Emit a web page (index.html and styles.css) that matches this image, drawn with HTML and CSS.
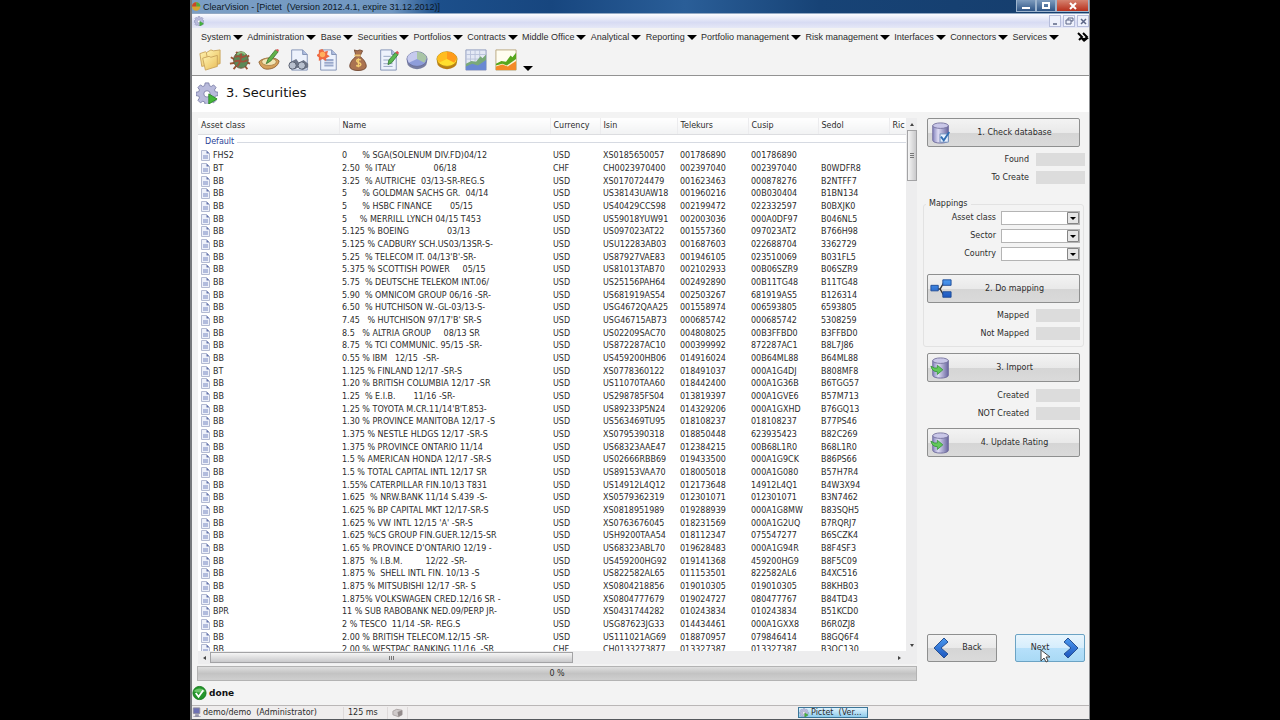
FILE: index.html
```html
<!DOCTYPE html>
<html lang="en">
<head>
<meta charset="utf-8">
<title>ClearVision - [Pictet  (Version 2012.4.1, expire 31.12.2012)]</title>
<link rel="stylesheet" href="styles.css">
</head>
<body>
<svg class="defs" aria-hidden="true">
  <defs>
    <linearGradient id="lilac"><stop offset="0" stop-color="#8584bd"/><stop offset=".35" stop-color="#dedcf4"/><stop offset="1" stop-color="#68669f"/></linearGradient>
    <linearGradient id="gold" x2="1" y2="1"><stop offset="0" stop-color="#fff3b0"/><stop offset="1" stop-color="#e9bd58"/></linearGradient>
    <linearGradient id="blue" x2="0" y2="1"><stop offset="0" stop-color="#4c9af0"/><stop offset="1" stop-color="#1c55bd"/></linearGradient>
    <symbol id="gear" viewBox="0 0 24 24">
      <path d="M10 1h4l.6 3 2 .9 2.600-1.700 2.700 2.800-1.700 2.600.8 2 3 .6v3.600l-3 .6-.8 2 1.700 2.600-2.700 2.700-2.600-1.700-2 .8-.6 3h-4l-.6-3-2-.8-2.600 1.700-2.700-2.700 1.700-2.600-.8-2-3-.6v-3.600l3-.6.8-2L2.100 6l2.700-2.800 2.600 1.700 2-.9z" fill="#b9bbdc" stroke="#7d80a8"/>
      <circle cx="12" cy="13" r="3.500" fill="#fff" stroke="#7d80a8"/>
      <path d="M14 13l9 5.500-9 5.500z" fill="#45b83a" stroke="#2c8a26"/>
    </symbol>
    <symbol id="page" viewBox="0 0 24 24">
      <path d="M4 1h12l5 5v17H4z" fill="#edf2fc" stroke="#7f8fb3"/><path d="M16 1v5h5" fill="#aebde0" stroke="#7f8fb3"/>
    </symbol>
    <symbol id="drum" viewBox="0 0 24 24">
      <path d="M3 4v16c0 4 17 4 17 0V4z" fill="url(#lilac)" stroke="#6d6a9b"/><ellipse cx="11.500" cy="4" rx="8.500" ry="3" fill="#c9c7e8" stroke="#77749f"/>
    </symbol>
  </defs>
</svg>

<div class="window">
  <header class="titlebar">
    <svg class="app-icon" viewBox="0 0 12 12"><circle cx="5" cy="6" r="5" fill="#d6a430"/><path d="M5 6V1a5 5 0 0 1 5 5z" fill="#4faa3d"/><path d="M5 6H0a5 5 0 0 1 5-5z" fill="#c7452b"/></svg>
    <span class="title-text">ClearVision - [Pictet&nbsp; (Version 2012.4.1, expire 31.12.2012)]</span>
    <div class="caption-buttons">
      <button class="cap" aria-label="Minimize"><svg viewBox="0 0 10 8"><path d="M1 5h8v2H1z" fill="#fff"/></svg></button>
      <button class="cap" aria-label="Maximize"><svg viewBox="0 0 10 8"><path d="M2 1h6v5H2z" fill="none" stroke="#fff" stroke-width="2"/></svg></button>
      <button class="cap cap-close" aria-label="Close"><svg viewBox="0 0 10 8"><path d="M2 1l6 6M8 1L2 7" stroke="#fff" stroke-width="2"/></svg></button>
    </div>
  </header>

  <div class="mdibar">
    <svg class="mdi-icon"><use href="#gear"/></svg>
    <div class="mdi-buttons">
      <button class="mdi" aria-label="Minimize document"><svg viewBox="0 0 10 10"><path d="M3 8h4" stroke="#5b6585" stroke-width="1.500"/></svg></button>
      <button class="mdi" aria-label="Restore document"><svg viewBox="0 0 10 10"><path d="M4 4V2h5v3H7M2 4h5v4H2z" fill="none" stroke="#5b6585"/></svg></button>
      <button class="mdi" aria-label="Close document"><svg viewBox="0 0 10 10"><path d="M3 3l5 5M8 3L3 8" stroke="#5b6585" stroke-width="1.500"/></svg></button>
    </div>
  </div>

  <nav class="menubar">
    <div class="menus">
      <button class="menu">System</button>
      <button class="menu">Administration</button>
      <button class="menu">Base</button>
      <button class="menu">Securities</button>
      <button class="menu">Portfolios</button>
      <button class="menu">Contracts</button>
      <button class="menu">Middle Office</button>
      <button class="menu">Analytical</button>
      <button class="menu">Reporting</button>
      <button class="menu">Portfolio management</button>
      <button class="menu">Risk management</button>
      <button class="menu">Interfaces</button>
      <button class="menu">Connectors</button>
      <button class="menu">Services</button>
    </div>
    <button class="menu-more" aria-label="More menus"><svg viewBox="0 0 12 10"><path d="M1 1l4 4-3 3M6 1l4 4-3 3" fill="none" stroke="#000" stroke-width="2"/><path d="M3 6h9l-5 4z"/></svg></button>
  </nav>

  <div class="toolbar">
    <div class="tools">
      <button class="tool" aria-label="Folders"><svg viewBox="0 0 24 24"><g fill="url(#gold)" stroke="#c9a45c"><path d="M1 5l6-2 2 2 7-1v12L3 19z"/><path d="M8 4l5-3 3 1 7-1v15l-12 3z"/><path d="M4 10l7-2 2 1 7-2v12L7 23z"/></g></svg></button>
      <button class="tool" aria-label="Bug"><svg viewBox="0 0 24 24"><path d="M2 9l5 3M1 16l6-1M5 22l4-5M20 22l-3-4M23 16l-5-2M22 7l-4 3M8 3l2 4" stroke="#9c5333" stroke-width="2"/><ellipse cx="13" cy="12" rx="8" ry="9" fill="#5b8857" stroke="#6c5537"/><path d="M7 9c4-4 6 3 12-2M6 14c5-4 8 3 14-2M9 19c4-5 5-9 4-16" fill="none" stroke="#a0513a" stroke-width="2"/><path d="M9 6c3-3 6-3 9 0" fill="none" stroke="#8bbf7d" stroke-width="2"/></svg></button>
      <button class="tool" aria-label="Edit balance"><svg viewBox="0 0 24 24"><path d="M1 14c4-5 18-6 22-1-1 6-7 9-13 9-5 0-8-4-9-8z" fill="#d6a15a" stroke="#916332"/><ellipse cx="12" cy="14" rx="8" ry="4" fill="#f2e5b4" stroke="#af844c"/><path d="M9 16l2-5 8-10 3 2-8 10z" fill="#62b24a" stroke="#467d3a"/><path d="M19 1l3 2 1-2-2-1z" fill="#dc5b5b"/></svg></button>
      <button class="tool" aria-label="Find document"><svg viewBox="0 0 24 24"><use href="#page"/><path d="M3 14l6-3 3 4 5-3 5 4v4l-6 3-4-3-5 2-6-4z" fill="#6d7588"/><circle cx="5" cy="18" r="4" fill="#b8c0ce" stroke="#525a6a"/><circle cx="15" cy="18" r="4" fill="#b8c0ce" stroke="#525a6a"/></svg></button>
      <button class="tool" aria-label="New document"><svg viewBox="0 0 24 24"><use href="#page"/><path d="M8 12h10M8 15h10M8 18h10" stroke="#9aa9cb" stroke-width="2"/><path d="M6 0l2 3 4-1-1 4 3 2-4 2v3l-4-2-4 2v-4L-1 7l3-2V1z" fill="#ef6a42"/><circle cx="6" cy="6" r="3" fill="#ffb05d"/></svg></button>
      <button class="tool" aria-label="Money"><svg viewBox="0 0 24 24"><path d="M8 1l3 1 3-1 3 1-3 6c4 3 7 7 7 11 0 6-18 6-18 0 0-4 3-8 7-11z" fill="#aa7351" stroke="#744a34"/><path d="M8 7h7" stroke="#eac073" stroke-width="2"/><path d="M15 12c-5-2-6 2-2 3s2 5-3 3M12.500 10v10" fill="none" stroke="#f5cf71" stroke-width="1.500"/></svg></button>
      <button class="tool" aria-label="Edit document"><svg viewBox="0 0 24 24"><use href="#page"/><path d="M7 8h8M7 12h7M7 16h10M7 19h10" stroke="#93a2c0"/><path d="M12 17l1-5 7-8 3 2-7 9z" fill="#5cb951" stroke="#397e38"/><path d="M20 4l3 2 1-2-2-2z" fill="#d85252"/></svg></button>
      <button class="tool" aria-label="Blue pie chart"><svg viewBox="0 0 24 24"><ellipse cx="12" cy="14" rx="11" ry="8" fill="#777da0"/><ellipse cx="12" cy="11" rx="11" ry="8" fill="#8e9dda" stroke="#696e99"/><path d="M12 11V3c5 0 10 3 10.500 7L20 15z" fill="#a9c5a6"/><path d="M12 11V3C7 3 1 6 1.500 11L3 15z" fill="#c6caee"/></svg></button>
      <button class="tool" aria-label="Orange pie chart"><svg viewBox="0 0 24 24"><ellipse cx="12" cy="14" rx="11" ry="8" fill="#b97e15"/><ellipse cx="12" cy="11" rx="11" ry="8" fill="#ffe02e" stroke="#b78c19"/><path d="M12 11V3c5 0 10 3 10.500 7L20 15z" fill="#ff9a1a"/><path d="M12 11V3C7 3 1 6 1.500 11L3 15z" fill="#ffbd1f"/></svg></button>
      <button class="tool" aria-label="Blue area chart"><svg viewBox="0 0 24 24"><path d="M1 1h22v22H1z" fill="#e4e9f5" stroke="#8d98bb"/><path d="M1 6h22M1 11h22M6 1v16M11 1v16M16 1v16" stroke="#b9c2da"/><path d="M1 16l6-3 5 1 5-6 2 2 4-4v15H1z" fill="#79a978"/><path d="M1 19l7-3 6 2 9-6v11H1z" fill="#6988d2"/></svg></button>
      <button class="tool" aria-label="Orange area chart"><svg viewBox="0 0 24 24"><path d="M1 1h22v22H1z" fill="#fffdf0" stroke="#b7a47b"/><path d="M1 16l6-3 5 1 5-7 2 2 4-5v18H1z" fill="#57a71e"/><path d="M1 18l7-2 5 2 10-7v4l-9 6-6-3-7 3z" fill="#fff3d4"/><path d="M1 19l7-2 6 2 9-6v10H1z" fill="#f38a27"/></svg></button>
    </div>
    <button class="tool-more" aria-label="More tools"></button>
  </div>

  <div class="page-title">
    <svg class="page-icon"><use href="#gear"/></svg>
    <h1>3. Securities</h1>
  </div>

  <main class="content">
    <section class="left">
      <div class="listbox">
        <div class="list-view">
          <table>
            <colgroup><col class="c-asset"><col class="c-name"><col class="c-cur"><col class="c-isin"><col class="c-tel"><col class="c-cusip"><col class="c-sedol"><col></colgroup>
            <thead><tr><th>Asset class</th><th>Name</th><th>Currency</th><th>Isin</th><th>Telekurs</th><th>Cusip</th><th>Sedol</th><th>Ric</th></tr></thead>
            <tbody class="group"><tr><td colspan="8"><div class="group-label">Default</div></td></tr></tbody>
            <tbody class="rows">
<tr><td>FHS2<td>0      % SGA(SOLENUM DIV.FD)04/12<td>USD<td>XS0185650057<td>001786890<td>001786890<td><td></tr>
<tr><td>BT<td>2.50  % ITALY               06/18<td>CHF<td>CH0023970400<td>002397040<td>002397040<td>B0WDFR8<td></tr>
<tr><td>BB<td>3.25  % AUTRICHE  03/13-SR-REG.S<td>USD<td>XS0170724479<td>001623463<td>000878276<td>B2NTFF7<td></tr>
<tr><td>BB<td>5      % GOLDMAN SACHS GR.  04/14<td>USD<td>US38143UAW18<td>001960216<td>00B030404<td>B1BN134<td></tr>
<tr><td>BB<td>5      % HSBC FINANCE       05/15<td>USD<td>US40429CCS98<td>002199472<td>022332597<td>B0BXJK0<td></tr>
<tr><td>BB<td>5     % MERRILL LYNCH 04/15 T453<td>USD<td>US59018YUW91<td>002003036<td>000A0DF97<td>B046NL5<td></tr>
<tr><td>BB<td>5.125 % BOEING               03/13<td>USD<td>US097023AT22<td>001557360<td>097023AT2<td>B766H98<td></tr>
<tr><td>BB<td>5.125 % CADBURY SCH.US03/13SR-S-<td>USD<td>USU12283AB03<td>001687603<td>022688704<td>3362729<td></tr>
<tr><td>BB<td>5.25  % TELECOM IT. 04/13'B'-SR-<td>USD<td>US87927VAE83<td>001946105<td>023510069<td>B031FL5<td></tr>
<tr><td>BB<td>5.375 % SCOTTISH POWER     05/15<td>USD<td>US81013TAB70<td>002102933<td>00B06SZR9<td>B06SZR9<td></tr>
<tr><td>BB<td>5.75  % DEUTSCHE TELEKOM INT.06/<td>USD<td>US25156PAH64<td>002492890<td>00B11TG48<td>B11TG48<td></tr>
<tr><td>BB<td>5.90  % OMNICOM GROUP 06/16 -SR-<td>USD<td>US681919AS54<td>002503267<td>681919AS5<td>B126314<td></tr>
<tr><td>BB<td>6.50  % HUTCHISON W.-GL-03/13-S-<td>USD<td>USG4672QAA25<td>001558974<td>006593805<td>6593805<td></tr>
<tr><td>BB<td>7.45   % HUTCHISON 97/17'B' SR-S<td>USD<td>USG46715AB73<td>000685742<td>000685742<td>5308259<td></tr>
<tr><td>BB<td>8.5   % ALTRIA GROUP     08/13 SR<td>USD<td>US02209SAC70<td>004808025<td>00B3FFBD0<td>B3FFBD0<td></tr>
<tr><td>BB<td>8.75  % TCI COMMUNIC. 95/15 -SR-<td>USD<td>US872287AC10<td>000399992<td>872287AC1<td>B8L7J86<td></tr>
<tr><td>BB<td>0.55 % IBM   12/15  -SR-<td>USD<td>US459200HB06<td>014916024<td>00B64ML88<td>B64ML88<td></tr>
<tr><td>BT<td>1.125 % FINLAND 12/17 -SR-S<td>USD<td>XS0778360122<td>018491037<td>000A1G4DJ<td>B808MF8<td></tr>
<tr><td>BB<td>1.20 % BRITISH COLUMBIA 12/17 -SR<td>USD<td>US11070TAA60<td>018442400<td>000A1G36B<td>B6TGG57<td></tr>
<tr><td>BB<td>1.25  % E.I.B.       11/16 -SR-<td>USD<td>US298785FS04<td>013819397<td>000A1GVE6<td>B57M713<td></tr>
<tr><td>BB<td>1.25 % TOYOTA M.CR.11/14'B'T.853-<td>USD<td>US89233P5N24<td>014329206<td>000A1GXHD<td>B76GQ13<td></tr>
<tr><td>BB<td>1.30 % PROVINCE MANITOBA 12/17 -S<td>USD<td>US563469TU95<td>018108237<td>018108237<td>B77PS46<td></tr>
<tr><td>BB<td>1.375 % NESTLE HLDGS 12/17 -SR-S<td>USD<td>XS0795390318<td>018850448<td>623935423<td>B82C269<td></tr>
<tr><td>BB<td>1.375 % PROVINCE ONTARIO 11/14<td>USD<td>US68323AAE47<td>012384215<td>00B68L1R0<td>B68L1R0<td></tr>
<tr><td>BB<td>1.5 % AMERICAN HONDA 12/17 -SR-S<td>USD<td>US02666RBB69<td>019433500<td>000A1G9CK<td>B86PS66<td></tr>
<tr><td>BB<td>1.5 % TOTAL CAPITAL INTL 12/17 SR<td>USD<td>US89153VAA70<td>018005018<td>000A1G080<td>B57H7R4<td></tr>
<tr><td>BB<td>1.55% CATERPILLAR FIN.10/13 T831<td>USD<td>US14912L4Q12<td>012173648<td>14912L4Q1<td>B4W3X94<td></tr>
<tr><td>BB<td>1.625  % NRW.BANK 11/14 S.439 -S-<td>USD<td>XS0579362319<td>012301071<td>012301071<td>B3N7462<td></tr>
<tr><td>BB<td>1.625 % BP CAPITAL MKT 12/17-SR-S<td>USD<td>XS0818951989<td>019288939<td>000A1G8MW<td>B83SQH5<td></tr>
<tr><td>BB<td>1.625 % VW INTL 12/15 'A' -SR-S<td>USD<td>XS0763676045<td>018231569<td>000A1G2UQ<td>B7RQRJ7<td></tr>
<tr><td>BB<td>1.625 %CS GROUP FIN.GUER.12/15-SR<td>USD<td>USH9200TAA54<td>018112347<td>075547277<td>B6SCZK4<td></tr>
<tr><td>BB<td>1.65 % PROVINCE D'ONTARIO 12/19 -<td>USD<td>US68323ABL70<td>019628483<td>000A1G94R<td>B8F4SF3<td></tr>
<tr><td>BB<td>1.875  % I.B.M.         12/22 -SR-<td>USD<td>US459200HG92<td>019141368<td>459200HG9<td>B8F5C09<td></tr>
<tr><td>BB<td>1.875 %  SHELL INTL FIN. 10/13 -S<td>USD<td>US822582AL65<td>011153501<td>822582AL6<td>B4XC516<td></tr>
<tr><td>BB<td>1.875 % MITSUBISHI 12/17 -SR- S<td>USD<td>XS0804218856<td>019010305<td>019010305<td>B8KHB03<td></tr>
<tr><td>BB<td>1.875% VOLKSWAGEN CRED.12/16 SR -<td>USD<td>XS0804777679<td>019024727<td>080477767<td>B84TD43<td></tr>
<tr><td>BPR<td>11 % SUB RABOBANK NED.09/PERP JR-<td>USD<td>XS0431744282<td>010243834<td>010243834<td>B51KCD0<td></tr>
<tr><td>BB<td>2 % TESCO  11/14 -SR- REG.S<td>USD<td>USG87623JG33<td>014434461<td>000A1GXX8<td>B6R0ZJ8<td></tr>
<tr><td>BB<td>2.00 % BRITISH TELECOM.12/15 -SR-<td>USD<td>US111021AG69<td>018870957<td>079846414<td>B8GQ6F4<td></tr>
<tr><td>BB<td>2.00 % WESTPAC BANKING 11/16  -SR<td>CHF<td>CH0133273877<td>013327387<td>013327387<td>B3QC130<td></tr>
            </tbody>
          </table>
        </div>
        <div class="vscroll"><i class="arrow up"></i><div class="vthumb"></div><i class="arrow down"></i></div>
        <div class="hscroll"><i class="arrow prev"></i><div class="hthumb"></div><i class="arrow next"></i></div>
        <div class="corner"></div>
      </div>
      <div class="progress" role="progressbar" aria-valuenow="0" aria-valuemin="0" aria-valuemax="100">0 %</div>
    </section>

    <aside class="side">
      <button class="action"><svg viewBox="0 0 24 24"><use href="#drum"/><path d="M11 13h9v9h-9z" fill="#e8f1ff" stroke="#708eb9"/><path d="M12 16l3 4 6-9" fill="none" stroke="#326eb2" stroke-width="2"/></svg><span>1. Check database</span></button>
      <div class="results wide">
        <label for="found">Found</label><input id="found" readonly>
        <label for="tocreate">To Create</label><input id="tocreate" readonly>
      </div>
      <fieldset>
        <legend>Mappings</legend>
        <div class="choices">
          <label for="asset">Asset class</label><select id="asset"><option></option></select>
          <label for="sector">Sector</label><select id="sector"><option></option></select>
          <label for="country">Country</label><select id="country"><option></option></select>
        </div>
        <button class="action"><svg viewBox="0 0 24 24"><path d="M8 12h3L15 5h2M11 12l4 7h2" fill="none" stroke="#333" stroke-width="1.500"/><g fill="url(#blue)" stroke="#1f4c96"><path d="M1 8h8v6H1zM14 2h9v6h-9zM14 15h9v6h-9z"/></g></svg><span>2. Do mapping</span></button>
        <div class="results">
          <label for="mapped">Mapped</label><input id="mapped" readonly>
          <label for="notmapped">Not Mapped</label><input id="notmapped" readonly>
        </div>
      </fieldset>
      <button class="action"><svg viewBox="0 0 24 24"><use href="#drum"/><path d="M1 10l4 2h3V9l6 5-6 5v-3C4 16 2 14 1 10z" fill="#62c95a" stroke="#3c9942"/></svg><span>3. Import</span></button>
      <div class="results">
        <label for="created">Created</label><input id="created" readonly>
        <label for="notcreated">NOT Created</label><input id="notcreated" readonly>
      </div>
      <button class="action"><svg viewBox="0 0 24 24"><use href="#drum"/><path d="M1 10l4 2h3V9l6 5-6 5v-3C4 16 2 14 1 10z" fill="#62c95a" stroke="#3c9942"/></svg><span>4. Update Rating</span></button>
      <div class="wizard">
        <button class="step"><svg viewBox="0 0 16 22"><path d="M11 1l4 4-7 6 7 6-4 4L1 11z" fill="url(#blue)" stroke="#275091"/></svg><span>Back</span></button>
        <button class="step hot"><span>Next</span><svg viewBox="0 0 16 22"><path d="M5 1L1 5l7 6-7 6 4 4 10-10z" fill="url(#blue)" stroke="#275091"/></svg>
          <svg class="pointer" viewBox="0 0 10 14"><path d="M1 1v11l3-3 2 4 2-1-2-4h4z" fill="#fff" stroke="#444"/></svg></button>
      </div>
    </aside>
  </main>

  <div class="message"><svg viewBox="0 0 16 16"><circle cx="8" cy="8" r="7" fill="#24962b" stroke="#157a1d"/><path d="M2 6a7 6 0 0 1 12 0c-4 2-8 2-12 0z" fill="#6cc66a"/><path d="M4 8l3 4 5-7" fill="none" stroke="#fff" stroke-width="2"/></svg><strong>done</strong></div>

  <footer class="statusbar">
    <span class="user"><svg viewBox="0 0 10 12"><path d="M1 1h7v6H1z" fill="#6e71b5" stroke="#8b8b9c"/><path d="M3 8h4v2h2v1H1v-1h2z" fill="#9393a8"/></svg>demo/demo&nbsp; (Administrator)</span>
    <span class="timing">125 ms</span>
    <span class="box"><svg viewBox="0 0 12 10"><path d="M1 3l4-2 6 1v5L7 9 1 7z" fill="#cfcaca" stroke="#aaa3a3"/><path d="M6 4l5-2v5L7 9z" fill="#938b8b"/></svg></span>
    <button class="task"><svg><use href="#gear"/></svg>Pictet&nbsp; (Ver...</button>
  </footer>
</div>
</body>
</html>
```
FILE: styles.css
```css
* { box-sizing: border-box; }
body {
  margin: 0;
  padding: 0 190px;
  background: #000;
  color: #2c2c2c;
  font: 8px/12px "DejaVu Sans", Verdana, sans-serif;
}
button, input, select { font: inherit; color: inherit; margin: 0; padding: 0; border: 0; background: none; }
svg { display: block; flex: none; }
.defs { position: absolute; width: 0; height: 0; }

.window {
  display: flex;
  flex-direction: column;
  height: 100vh;
  background: #f3f3f3;
  border-left: 2px solid #77797c;
  border-right: 1px solid #8b8d90;
  border-bottom: 1px solid #55585c;
  overflow: hidden;
}

.titlebar {
  display: flex;
  height: 14px;
  align-items: center;
  background: linear-gradient(90deg, #7c9fc5 0, #6f96c1 200px, #1c4f8b 245px, #17467f 40%, #2a5e98 55%, #174376 70%, #153d6c);
  border-bottom: 1px solid #93a9c4;
  font: 9px/12px "Liberation Sans", Arial, sans-serif;
  color: #0c1724;
}
.app-icon { width: 10px; height: 11px; }
.title-text { padding-left: 1px; white-space: nowrap; }
.caption-buttons { display: flex; margin-left: auto; height: 12px; align-self: flex-start; }
.cap {
  display: flex;
  width: 20px;
  align-items: center;
  justify-content: center;
  background: linear-gradient(#7d9bbd, #2f5687);
  border: 1px solid #9db4cd;
  border-top: 0;
}
.cap svg { width: 10px; height: 8px; }
.cap-close { width: 33px; background: linear-gradient(#d58370, #b8301c); }

.mdibar {
  display: flex;
  height: 14px;
  align-items: center;
  padding-left: 2px;
  background: linear-gradient(#fbfcff, #d7dbf3 60%, #e5e8f6);
}
.mdi-icon { width: 10px; height: 10px; }
.mdi-buttons { display: flex; gap: 2px; margin-left: auto; }
.mdi { width: 12px; height: 12px; border: 1px solid #b6bddb; background: #eef1fb; }
.mdi svg { width: 10px; height: 10px; }

.menubar {
  display: flex;
  height: 18px;
  align-items: center;
  gap: 18px;
  padding-left: 9px;
  font: 9px/14px "Liberation Sans", Arial, sans-serif;
}
.menus { display: flex; flex: 1; justify-content: space-between; }
.menu { display: flex; align-items: center; gap: 2px; white-space: nowrap; }
.menu::after, .tool-more {
  content: "";
  border: solid transparent;
  border-width: 5px 5px 0;
  border-top-color: #000;
}
.menu-more svg { width: 12px; height: 10px; }

.toolbar {
  display: flex;
  height: 30px;
  align-items: center;
  gap: 6px;
  padding: 0 0 2px 7px;
  border-bottom: 1px solid #929292;
}
.tools { display: flex; width: 318px; justify-content: space-between; }
.tool svg { width: 22px; height: 22px; }
.tool-more { margin-top: 18px; }

.page-title {
  display: flex;
  height: 36px;
  align-items: center;
  gap: 8px;
  padding: 0 4px 2px;
  background: #fff;
}
.page-icon { width: 22px; height: 22px; }
h1 { margin: 0; font: 13px/18px "DejaVu Sans", Verdana, sans-serif; color: #111; }

.content {
  display: flex;
  flex: 1;
  min-height: 0;
  gap: 6px;
  padding: 6px 4px 0 6px;
}
.left { display: flex; flex: 1; flex-direction: column; gap: 2px; min-width: 0; }
.listbox {
  display: grid;
  flex: 1;
  min-height: 0;
  grid-template: minmax(0, 1fr) 13px / minmax(0, 1fr) 11px;
}
.list-view { overflow: hidden; background: #fff; }
table { width: 100%; table-layout: fixed; border-collapse: collapse; }
.c-asset { width: 141px; }
.c-name { width: 211px; }
.c-cur { width: 50px; }
.c-isin { width: 77px; }
.c-tel { width: 71px; }
.c-cusip { width: 70px; }
.c-sedol { width: 71px; }
th {
  height: 16px;
  padding: 0 0 0 3px;
  font-weight: normal;
  text-align: left;
  background: linear-gradient(#fff, #f1f2f3);
  border-bottom: 1px solid #dcdde0;
  border-right: 1px solid #ececee;
}
th:last-child { border-right: 0; }
td { padding: 0 0 0 3px; white-space: pre; }
.group-label { display: flex; height: 15px; align-items: center; gap: 3px; padding-left: 4px; color: #2b3f97; }
.group-label::after { content: ""; flex: 1; height: 1px; background: #d6dae2; }
.rows td { height: 13px; line-height: 12px; }
.rows tr:nth-child(3n) td { height: 12px; }
.rows td:first-child::before {
  content: "";
  display: inline-block;
  width: 9px;
  height: 11px;
  margin-right: 3px;
  vertical-align: top;
  background: url("data:image/svg+xml,%3Csvg xmlns='http://www.w3.org/2000/svg' viewBox='0 0 9 11'%3E%3Cpath d='M.5.500h5l3 3v7h-8z' fill='%23eef1fa' stroke='%23b3bad2'/%3E%3Cpath d='M5.500.500v3h3z' fill='%236474ab'/%3E%3Cpath d='M2 5h5v4H2z' fill='%23b2bcdd'/%3E%3C/svg%3E");
}

.vscroll, .hscroll { display: flex; align-items: center; background: #ededee; }
.vscroll { flex-direction: column; padding: 5px 0 4px; }
.hscroll { padding: 0 5px; }
.corner { background: #ededee; }
.vthumb {
  width: 10px;
  height: 51px;
  margin: 4px 0 auto;
  border: 1px solid #a3a3a5;
  background: repeating-linear-gradient(#777 0 1px, transparent 1px 2px) center / 4px 5px no-repeat, linear-gradient(90deg, #f5f5f5, #c9c9cb);
}
.hthumb {
  width: 52%;
  height: 11px;
  margin: 0 auto 0 4px;
  border: 1px solid #a3a3a5;
  background: repeating-linear-gradient(90deg, #777 0 1px, transparent 1px 2px) center / 5px 4px no-repeat, linear-gradient(#f5f5f5, #c9c9cb);
}
.arrow { border: 2px solid transparent; }
.up { border-top: 0; border-bottom: 3px solid #444; }
.down { border-bottom: 0; border-top: 3px solid #444; }
.prev { border-left: 0; border-right: 3px solid #444; }
.next { border-right: 0; border-left: 3px solid #444; }

.progress {
  height: 15px;
  margin-left: -1px;
  border: 1px solid #b3b3b3;
  background: linear-gradient(#dedede, #c3c3c3 50%, #cfcfcf);
  line-height: 13px;
  text-align: center;
}

.side { display: flex; width: 162px; flex-direction: column; }
.side > .action { margin: 0 5px 0 4px; }
.action {
  display: flex;
  height: 29px;
  flex: none;
  align-items: center;
  padding-left: 2px;
  border: 1px solid #8e8f8f;
  border-radius: 2px;
  background: linear-gradient(#f3f3f3, #e9e9e9 50%, #d5d5d5 51%, #dadada);
}
.action svg { width: 22px; height: 22px; }
.action span { flex: 1; padding-right: 2px; text-align: center; }
.results, .choices { display: grid; align-items: center; text-align: right; column-gap: 7px; row-gap: 5px; }
.results { grid-template-columns: 1fr 44px; margin: 7px 5px 8px 0; }
.results.wide { grid-template-columns: 1fr 49px; margin: 6px 0 14px; }
.results input { width: 100%; height: 13px; background: #dcdcdc; }
fieldset {
  min-width: 0;
  margin: 0 1px 6px 0;
  padding: 1px 3px 6px;
  border: 1px solid #e2e2e2;
  border-radius: 3px;
}
legend { padding: 0 3px; margin-left: -1px; }
.choices { grid-template-columns: 1fr 79px; column-gap: 5px; row-gap: 4px; margin-bottom: 13px; }
.choices select {
  appearance: none;
  width: 100%;
  height: 14px;
  border: 1px solid #b4b4b4;
  border-radius: 0;
  background: url("data:image/svg+xml,%3Csvg xmlns='http://www.w3.org/2000/svg' viewBox='0 0 12 12'%3E%3Cpath d='M.5.500h11v11H.5z' fill='%23e6e6e6' stroke='%23858585'/%3E%3Cpath d='M3 5h6L6 8z'/%3E%3C/svg%3E") right / 12px 12px no-repeat #fff;
}
fieldset .action { width: 153px; }
fieldset .results { margin: 6px 0 0; }
.wizard { display: flex; justify-content: space-between; margin: auto 0 19px 4px; }
.step {
  position: relative;
  display: flex;
  width: 70px;
  height: 28px;
  align-items: center;
  padding: 0 5px;
  gap: 4px;
  border: 1px solid #8e8f8f;
  border-radius: 2px;
  background: linear-gradient(#f3f3f3, #e9e9e9 50%, #d5d5d5 51%, #dadada);
}
.step svg { width: 16px; height: 22px; }
.step span { flex: 1; text-align: center; }
.step.hot { border-color: #6ba3c4; background: linear-gradient(#e8f5fd, #d5edfc 50%, #b6e0fa 51%, #a9d9f5); }
.step .pointer { position: absolute; left: 24px; top: 14px; width: 10px; height: 14px; }

.message { display: flex; height: 24px; align-items: center; gap: 2px; color: #111; font-size: 9px; }
.message svg { width: 15px; height: 16px; }
.statusbar {
  display: flex;
  height: 14px;
  align-items: center;
  border-top: 1px solid #b9b6b6;
  background: #efeded;
}
.statusbar span { display: flex; height: 12px; align-items: center; border-right: 1px solid #dedada; }
.user { width: 152px; gap: 1px; }
.user svg { width: 10px; height: 11px; }
.timing { width: 44px; padding-left: 4px; }
.box { width: 20px; padding-left: 4px; }
.box svg { width: 11px; height: 10px; }
.task {
  display: flex;
  width: 70px;
  height: 11px;
  margin: 0 221px 0 auto;
  align-items: center;
  gap: 2px;
  border: 1px solid #3b7597;
  background: linear-gradient(#e0f3fd, #8ecbec);
  line-height: 9px;
  white-space: nowrap;
}
.task svg { width: 10px; height: 9px; }
```
